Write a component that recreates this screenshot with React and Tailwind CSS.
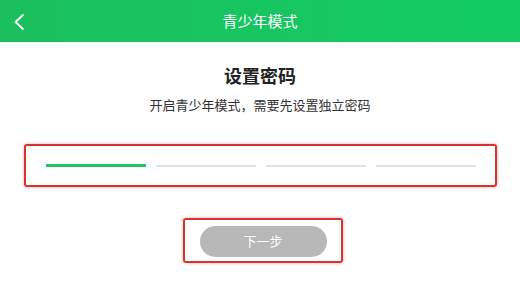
import React from 'react';

const App = () => {
  return (
    <div
      className="w-[520px] h-[289px] bg-white overflow-hidden"
      style={{ fontFamily: '"Noto Sans CJK SC", "Noto Sans", sans-serif' }}
    >
      {/* Header */}
      <div className="h-[42px] bg-gradient-to-r from-[#1bbf5e] to-[#12cc63] flex items-center relative">
        <svg className="absolute left-[12px] top-[13px]" width="14" height="18" viewBox="0 0 14 18" fill="none">
          <path d="M11 2 L3.5 9 L11 16" stroke="white" strokeWidth="1.8" strokeLinecap="round" strokeLinejoin="round" />
        </svg>
        <div className="w-full text-center text-white text-[15px] leading-[20px]">青少年模式</div>
      </div>

      {/* Content */}
      <div className="flex flex-col items-center">
        <h1 className="mt-[21px] text-[18px] leading-[24px] font-bold text-[#222]">设置密码</h1>
        <p className="mt-[9px] text-[13px] leading-[18px] text-[#333]">开启青少年模式，需要先设置独立密码</p>

        <div className="mt-[30px] w-[473px] h-[43px] border-2 border-[#d8342f] rounded-[3px] shadow-[0_0_3px_rgba(216,52,47,0.5)] flex items-center justify-center gap-[10px] pl-[1px]">
          <div className="w-[100px] h-[3px] bg-[#22c164]" />
          <div className="w-[100px] h-[2px] bg-[#e2e2e2]" />
          <div className="w-[100px] h-[2px] bg-[#e2e2e2]" />
          <div className="w-[100px] h-[2px] bg-[#e2e2e2]" />
        </div>

        <div className="mt-[31px] ml-[6px] w-[160px] h-[45px] border-2 border-[#d8342f] rounded-[3px] shadow-[0_0_3px_rgba(216,52,47,0.5)] flex items-center justify-center pt-[1px]">
          <button className="w-[127px] h-[31px] rounded-full bg-[#b8b8b8] text-white text-[13px] leading-[18px]">
            下一步
          </button>
        </div>
      </div>
    </div>
  );
};

export default App;
